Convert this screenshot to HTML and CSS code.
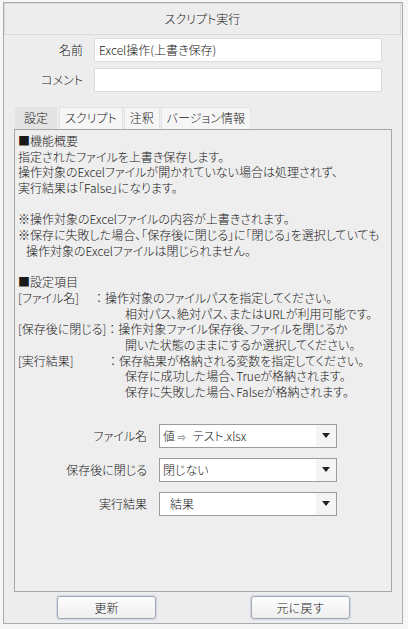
FILE: index.html
```html
<!DOCTYPE html>
<html lang="ja">
<head>
    <meta charset="UTF-8">
    <title>スクリプト実行</title>
    <link rel="stylesheet" href="styles.css">
</head>
<body>
    <div class="window">
        <div class="title">スクリプト実行</div>

        <div class="fields">
            <label class="field-label">名前</label>
            <div class="textbox">Excel操作(上書き保存)</div>
            <label class="field-label">コメント</label>
            <div class="textbox"></div>
        </div>

        <div class="tabs">
            <div class="tab active">設定</div>
            <div class="tab">スクリプト</div>
            <div class="tab">注釈</div>
            <div class="tab">バージョン情報</div>
        </div>

        <div class="panel">
            <div class="desc">
                <div>■機能概要</div>
                <div>指定されたファイルを上書き保存します。</div>
                <div>操作対象のExcelファイルが開かれていない場合は処理されず、</div>
                <div>実行結果は「False」になります。</div>
                <div class="blank"></div>
                <div>※操作対象のExcelファイルの内容が上書きされます。</div>
                <div>※保存に失敗した場合、「保存後に閉じる」に「閉じる」を選択していても</div>
                <div class="note-cont">操作対象のExcelファイルは閉じられません。</div>
                <div class="blank"></div>
                <div>■設定項目</div>
                <div><span class="key key-file">[ファイル名]</span><span class="colon">：</span>操作対象のファイルパスを指定してください。</div>
                <div class="cont">相対パス、絶対パス、またはURLが利用可能です。</div>
                <div><span class="key">[保存後に閉じる]</span><span class="colon">：</span>操作対象ファイル保存後、ファイルを閉じるか</div>
                <div class="cont">開いた状態のままにするか選択してください。</div>
                <div><span class="key key-result">[実行結果]</span><span class="colon">：</span>保存結果が格納される変数を指定してください。</div>
                <div class="cont">保存に成功した場合、Trueが格納されます。</div>
                <div class="cont">保存に失敗した場合、Falseが格納されます。</div>
            </div>

            <div class="options">
                <span class="option-label">ファイル名</span>
                <div class="combo">
                    <span class="combo-text">値<span class="arrow-mark">⇒</span> テスト.xlsx</span>
                    <span class="combo-btn"><svg width="8" height="5" viewBox="0 0 8 5"><path d="M0 0H8L4 5Z" fill="#222"/></svg></span>
                </div>

                <span class="option-label">保存後に閉じる</span>
                <div class="combo">
                    <span class="combo-text">閉じない</span>
                    <span class="combo-btn"><svg width="8" height="5" viewBox="0 0 8 5"><path d="M0 0H8L4 5Z" fill="#222"/></svg></span>
                </div>

                <span class="option-label">実行結果</span>
                <div class="combo">
                    <span class="combo-text indent">結果</span>
                    <span class="combo-btn"><svg width="8" height="5" viewBox="0 0 8 5"><path d="M0 0H8L4 5Z" fill="#222"/></svg></span>
                </div>
            </div>
        </div>

        <div class="buttons">
            <button class="btn">更新</button>
            <button class="btn">元に戻す</button>
        </div>
    </div>
</body>
</html>
```

FILE: styles.css
```css
* {
    box-sizing: border-box;
}

body {
    margin: 0;
    background-color: #f6f6f6;
    font-family: "Noto Sans CJK JP", "Noto Sans", sans-serif;
    font-size: 12px;
    font-weight: 300;
    font-feature-settings: "palt";
    color: #1a1a1a;
}

.window {
    margin: 2px 0 0 3px;
    width: 400px;
    height: 622px;
    border: 1px solid #ababab;
    background-color: #ededed;
    display: flex;
    flex-direction: column;
}

.title {
    margin: 0 1px 0 0;
    height: 32px;
    line-height: 30px;
    border: 1px solid #d9d9d9;
    text-align: center;
}

.fields {
    margin-top: 3px;
    display: grid;
    grid-template-columns: 79px 288px;
    column-gap: 11px;
    row-gap: 6px;
}

.field-label {
    text-align: right;
    line-height: 24px;
}

.textbox {
    height: 24px;
    line-height: 22px;
    padding: 0 4px;
    background: #fff;
    border: 1px solid #dcdcdc;
}

.tabs {
    margin: 15px 0 0 11px;
    height: 22px;
    display: flex;
    gap: 1px;
}

.tab {
    padding: 0 5px;
    line-height: 20px;
    height: 22px;
    border: 1px solid #e3e3e3;
    border-bottom: none;
    background: #f6f6f6;
}

.tab.active {
    background: #e3e3e3;
    padding: 0 8px;
    margin-right: 1px;
}

.panel {
    margin-left: 10px;
    width: 378px;
    height: 463px;
    border: 1px solid #a6a6a6;
    background: #eeeeee;
    padding: 3px 3px 0 3px;
}

.desc div {
    line-height: 15.7px;
    height: 15.7px;
    white-space: nowrap;
}

.note-cont {
    padding-left: 8px;
}

.cont {
    padding-left: 107px;
}

.key {
    display: inline-block;
}

.key-file {
    width: 75px;
}

.key-result {
    width: 89px;
}

.colon {
    display: inline-block;
    width: 12px;
    text-align: center;
    font-feature-settings: normal;
}

.options {
    margin-top: 24px;
    margin-left: -3px;
    display: grid;
    grid-template-columns: 132px 178px;
    column-gap: 12px;
    row-gap: 10px;
}

.option-label {
    text-align: right;
    line-height: 24px;
}

.combo {
    height: 24px;
    border: 1px solid #9c9c9c;
    background: #fff;
    display: flex;
    align-items: center;
}

.combo-text {
    flex: 1;
    padding-left: 3px;
    white-space: nowrap;
}

.combo-text.indent {
    padding-left: 10px;
}

.arrow-mark {
    font-size: 9px;
    color: #555;
    margin: 0 4px 0 2px;
}

.combo-btn {
    width: 20px;
    height: 22px;
    background: #f4f4f4;
    display: flex;
    align-items: center;
    justify-content: center;
}

.buttons {
    margin-top: 4px;
    display: flex;
    padding-left: 53px;
    gap: 95px;
}

.btn {
    width: 99px;
    height: 23px;
    font-family: inherit;
    font-size: 12px;
    font-weight: 300;
    color: #1a1a1a;
    border: 1px solid #a8a8a8;
    border-radius: 3px;
    background: linear-gradient(#fdfdfd, #eeeeee);
    box-shadow: 0 0 1px 1px rgba(140, 175, 225, 0.35);
    padding: 0;
}
```
